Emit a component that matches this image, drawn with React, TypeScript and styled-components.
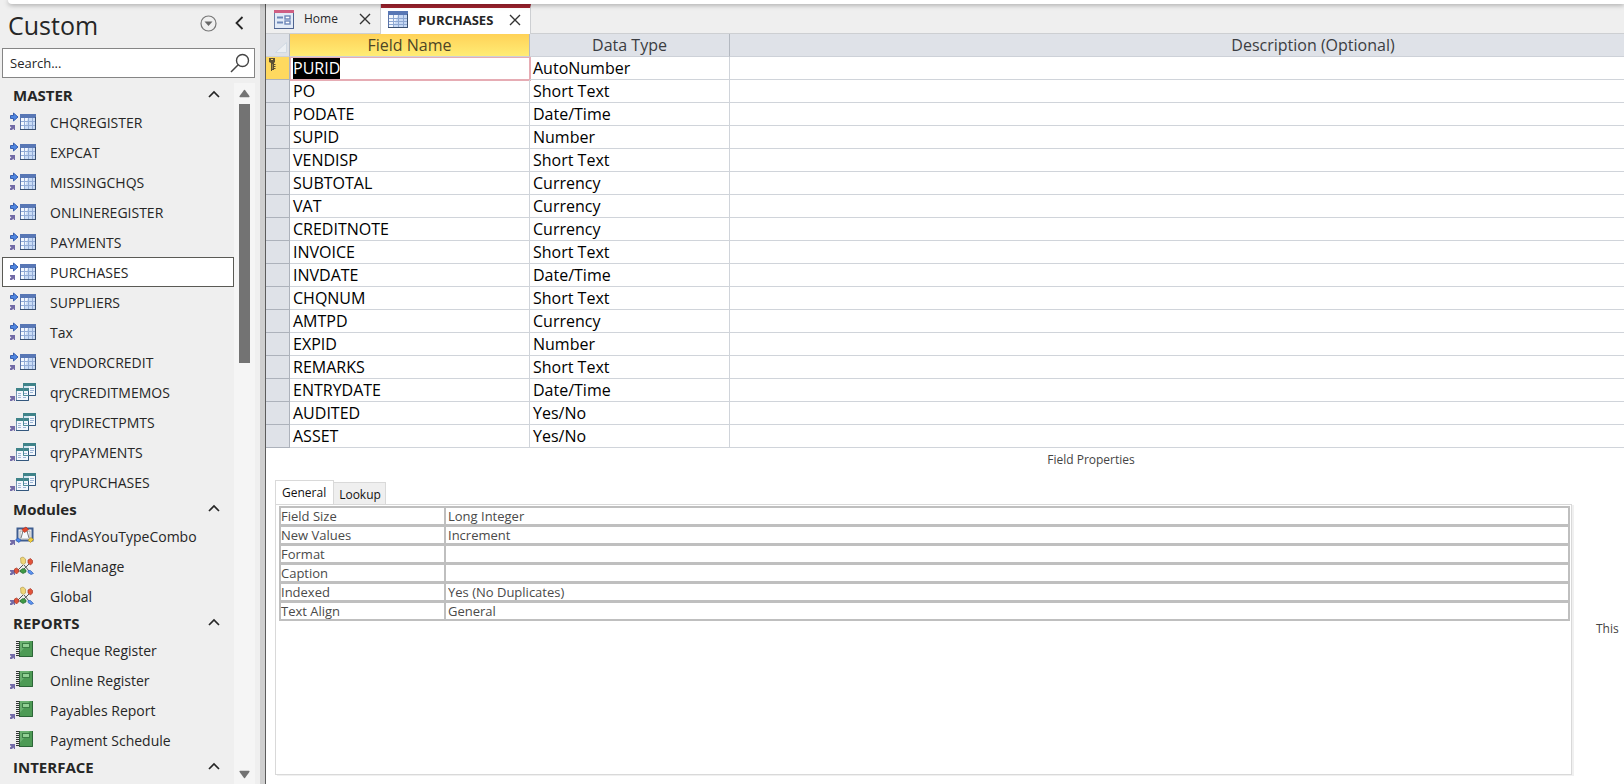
import React, { useState } from 'react';
import styled, { createGlobalStyle } from 'styled-components';

const GlobalStyle = createGlobalStyle`
  *, *::before, *::after { box-sizing: border-box; }
  body {
    margin: 0;
    background: #efefef;
    color: #262626;
    font-family: "Open Sans", "Noto Sans", sans-serif;
    font-size: 14px;
  }
  button {
    margin: 0;
    padding: 0;
    border: 0;
    background: none;
    color: inherit;
    font: inherit;
    cursor: pointer;
  }
  svg { display: block; flex: none; }
`;

/* ---------- shell ---------- */

const Page = styled.div`
  min-height: 100vh;
  display: flex;
  flex-direction: column;
  overflow: hidden;
`;

const RibbonEdge = styled.div`
  position: relative;
  z-index: 1;
  flex: none;
  height: 4px;
  margin-left: 8px;
  background: #fff;
  border-bottom-left-radius: 8px;
  box-shadow: 0 1px 5px rgba(0, 0, 0, 0.35);
`;

const Body = styled.div`
  flex: 1;
  display: flex;
`;

const Splitter = styled.div`
  flex: none;
  width: 6px;
  background: #cfcfcf;
  border-right: 1px solid #5c5c5c;
`;

/* ---------- navigation pane ---------- */

const NavPane = styled.nav`
  flex: none;
  width: 260px;
  display: flex;
  flex-direction: column;
`;

const NavHeader = styled.header`
  display: flex;
  align-items: center;
  height: 38px;
  margin-bottom: 6px;
  padding: 0 16px 0 8px;
`;

const NavTitle = styled.h1`
  flex: 1;
  margin: 0;
  padding-top: 4px;
  font-size: 25px;
  font-weight: 400;
  line-height: 34px;
`;

const HeaderActions = styled.div`
  display: flex;
  align-items: center;
  gap: 18px;
`;

const SearchBox = styled.form`
  display: flex;
  align-items: center;
  height: 30px;
  margin: 0 5px 5px 2px;
  padding: 0 4px 0 7px;
  border: 1px solid #858585;
  background: #fff;
`;

const SearchInput = styled.input`
  flex: 1;
  min-width: 0;
  padding: 0;
  border: 0;
  outline: 0;
  background: none;
  color: #262626;
  font: 13px "Open Sans", sans-serif;
  &::placeholder { color: #262626; opacity: 1; }
`;

const NavScroller = styled.div`
  flex: 1;
  display: flex;
  padding-right: 5px;
`;

const NavList = styled.div`
  flex: 1;
  min-width: 0;
`;

const GroupHeader = styled.button`
  display: flex;
  align-items: center;
  justify-content: space-between;
  width: 100%;
  height: 24px;
  padding: 0 14px 0 13px;
  font-size: 15px;
  font-weight: 700;
  line-height: 24px;
`;

const Items = styled.ul`
  margin: 0;
  padding: 0 0 0 2px;
  list-style: none;
`;

const NavItem = styled.button<{ $selected: boolean }>`
  display: flex;
  align-items: center;
  gap: 14px;
  width: 100%;
  height: 30px;
  padding-left: 7px;
  border: 1px solid ${(p) => (p.$selected ? '#5a5a55' : 'transparent')};
  background: ${(p) => (p.$selected ? '#fff' : 'transparent')};
  white-space: nowrap;
`;

const NavLabel = styled.span`
  padding-top: 2px;
  line-height: 26px;
`;

const ScrollTrack = styled.div`
  flex: none;
  width: 21px;
  display: flex;
  flex-direction: column;
  align-items: center;
  padding: 6px 0 5px;
  background: #f5f5f5;
`;

const ScrollThumb = styled.div`
  width: 11px;
  height: 259px;
  margin-top: 6px;
  margin-bottom: auto;
  background: #737373;
`;

/* ---------- document area ---------- */

const Workspace = styled.main`
  flex: 1;
  min-width: 0;
  display: flex;
  flex-direction: column;
  overflow: hidden;
`;

const TabStrip = styled.div`
  flex: none;
  display: flex;
  height: 30px;
  border-bottom: 1px solid #cdcfd2;
`;

const DocTab = styled.div<{ $active: boolean }>`
  display: flex;
  align-items: center;
  height: ${(p) => (p.$active ? 30 : 29)}px;
  padding: ${(p) => (p.$active ? '0 9px 3px 7px' : '0 9px 0 8px')};
  border-top: ${(p) => (p.$active ? '4px solid #a0232f' : '0')};
  border-right: 1px solid #cdcfd2;
  background: ${(p) => (p.$active ? '#fff' : 'transparent')};
`;

const DocTabButton = styled.button<{ $active: boolean }>`
  display: flex;
  align-items: center;
  gap: 10px;
  margin-right: ${(p) => (p.$active ? 16 : 21)}px;
  font-size: ${(p) => (p.$active ? 13 : 12)}px;
  font-weight: ${(p) => (p.$active ? 700 : 400)};
`;

/* The design surface is wider than the visible window and is cut off on the right. */
const Surface = styled.div`
  flex: 1;
  width: calc(100% + 292px);
  display: flex;
  flex-direction: column;
  background: #fff;
`;

const FieldTable = styled.table`
  width: calc(100% - 19px);
  table-layout: fixed;
  border-spacing: 0;
  color: #000;
  font-size: 16px;
  line-height: 22px;
`;

const Col = styled.col<{ $width?: number }>`
  width: ${(p) => (p.$width ? `${p.$width}px` : 'auto')};
`;

const HeadCell = styled.th<{ $current?: boolean }>`
  height: 23px;
  padding: 0;
  border-right: 1px solid #b3b8c0;
  border-bottom: 1px solid #cdd1d8;
  background: ${(p) => (p.$current ? 'linear-gradient(#ffd258, #ffec75)' : '#dfe2e8')};
  color: ${(p) => (p.$current ? '#4d4526' : '#3b3d42')};
  font-weight: 400;
`;

const CornerCell = styled(HeadCell)`
  padding: 0 2px 3px 0;
  vertical-align: bottom;
  svg { margin-left: auto; }
`;

const RowSelector = styled.td<{ $current: boolean }>`
  height: 23px;
  padding: 1px 0 0 3px;
  vertical-align: top;
  border-right: 1px solid #adb2bb;
  border-bottom: 1px solid #adb2bb;
  background: ${(p) => (p.$current ? '#ffd95f' : '#dfe2e8')};
`;

const Cell = styled.td<{ $focused?: boolean }>`
  position: relative;
  height: 23px;
  padding: 0 3px;
  border-right: 1px solid #d0d4da;
  border-bottom: 1px solid #d0d4da;
  white-space: nowrap;
  &::after {
    content: "";
    display: ${(p) => (p.$focused ? 'block' : 'none')};
    position: absolute;
    inset: 0 -2px -2px 0;
    border: 1px solid #e6acb4;
    border-width: 1px 2px 2px 1px;
  }
`;

const SelectedText = styled.span`
  display: inline-block;
  background: #000;
  color: #fff;
`;

/* ---------- field properties ---------- */

const PropertiesTitle = styled.h2`
  margin: 2px 0 10px;
  color: #444;
  font-size: 12px;
  font-weight: 400;
  line-height: 20px;
  text-align: center;
`;

const PropertyTabs = styled.div`
  display: flex;
  align-items: flex-end;
  padding-left: 9px;
`;

const PropertyTab = styled.button<{ $active: boolean }>`
  height: ${(p) => (p.$active ? 24 : 22)}px;
  padding: ${(p) => (p.$active ? '0 7px 0 6px' : '1px 4px 0 5px')};
  border: 1px solid #d9d9d9;
  border-bottom: 0;
  border-left-width: ${(p) => (p.$active ? 1 : 0)}px;
  background: ${(p) => (p.$active ? '#fff' : '#efefef')};
  color: #111;
  font-size: 12px;
`;

const PropertiesArea = styled.div`
  flex: 1;
  display: flex;
  padding: 0 0 9px 9px;
`;

const PropertySheet = styled.section`
  flex: 1;
  padding: 1px 1px 0 3px;
  border: 1px solid #d9d9d9;
  box-shadow: 2px 1px 0 #f0f0f0;
`;

const PropertyTable = styled.table`
  width: 100%;
  table-layout: fixed;
  border: 2px solid #bfbfbf;
  border-bottom: 0;
  border-spacing: 0;
  color: #4a4a4a;
  font-size: 13px;
  line-height: 16px;
`;

const PropertyName = styled.th`
  width: 165px;
  padding: 0;
  border-right: 2px solid #bfbfbf;
  border-bottom: 3px solid #bfbfbf;
  font-weight: 400;
  text-align: left;
  tr:last-child > & { border-bottom-width: 2px; }
`;

const PropertyValue = styled.td`
  padding: 0 2px;
  border-bottom: 3px solid #bfbfbf;
  tr:last-child > & { border-bottom-width: 2px; }
`;

const PropertyLabel = styled.label`
  display: block;
  height: 16px;
`;

const PropertyInput = styled.input`
  display: block;
  width: 100%;
  height: 16px;
  padding: 0;
  border: 0;
  outline: 0;
  background: none;
  color: inherit;
  font: inherit;
`;

const HelpText = styled.aside`
  flex: none;
  display: flex;
  align-items: center;
  width: 344px;
  padding: 0 24px 22px;
  color: #444;
  font-size: 12px;
`;

/* ---------- icons ---------- */

type Kind = 'table' | 'query' | 'classModule' | 'module' | 'report';

const Link = ({ y }: { y: number }) => (
  <path d={`M0 ${y}H5V${y + 5}H4L3.5 ${y + 3.5}L2 ${y + 5}H0V${y + 3.5}L1.5 ${y + 2}L0 ${y + 1.5}Z`} fill="#726aa6" />
);

const TableGlyph = () => (
  <g>
    <rect x="10.5" y="2.5" width="15" height="15" fill="#f4f8fe" stroke="#5a73a8" />
    <path d="M18 6H25V17H14Z" fill="#c9dbf6" />
    <path d="M10 2H26V6H10Z" fill="#5877b5" />
    <path d="M11 9.5H25M11 13.5H25M14.5 6V17M18.5 6V17M22.5 6V17" stroke="#93acd6" fill="none" />
    <path d="M25.5 5V17.5H10" stroke="#3a5070" fill="none" />
  </g>
);

const QueryWindow = ({ x, y }: { x: number; y: number }) => (
  <g>
    <rect x={x + 0.5} y={y + 0.5} width="12" height="12" fill="#f3f8fd" stroke="#7195b5" />
    <path d={`M${x} ${y}H${x + 13}V${y + 3}H${x}Z`} fill="#3f8389" />
    <path d={`M${x + 2} ${y + 5.5}H${x + 5}M${x + 2} ${y + 7.5}H${x + 5}M${x + 2} ${y + 9.5}H${x + 5}M${x + 7} ${y + 5.5}H${x + 11}M${x + 7} ${y + 7.5}H${x + 11}M${x + 7} ${y + 9.5}H${x + 10}`} stroke="#9bb4d4" />
    <path d={`M${x + 12.5} ${y + 3}V${y + 12.5}H${x}`} stroke="#33577d" fill="none" />
  </g>
);

const ObjectIcon = ({ kind }: { kind: Kind }) => (
  <svg width="26" height="20" viewBox="0 0 26 20" aria-hidden="true">
    {kind === 'table' && (
      <>
        <path d="M.5 3.5H3.5V1L8 5L3.5 9V6.5H.5Z" fill="#4f86e0" stroke="#2d55a8" strokeWidth=".9" />
        <Link y={13} />
        <TableGlyph />
      </>
    )}
    {kind === 'query' && (
      <>
        <Link y={14} />
        <QueryWindow x={13} y={1} />
        <QueryWindow x={6} y={6} />
        <path d="M13.5 4V13.5H19" stroke="#4d8d97" fill="none" />
        <path d="M14 4H19V6H14Z" fill="#d5e6f2" />
      </>
    )}
    {kind === 'classModule' && (
      <>
        <Link y={14} />
        <rect x="7.5" y="2.5" width="15" height="12" fill="#fff" stroke="#3f5d8f" strokeWidth="2" />
        <rect x="10" y="5" width="10" height="8" fill="#f7f9fd" stroke="#9a9a9a" strokeWidth=".8" />
        <path d="M13 5L11 12M17 5L19 12" stroke="#555" strokeWidth=".8" />
        <path d="M12 3.5L14.5 6.5L18.5 3.5L16 1Z" fill="#e4472c" stroke="#b03420" strokeWidth=".7" />
        <path d="M5.5 14L8 12L11 14L9 16.5Z" fill="#4c86e8" stroke="#2c5cb4" strokeWidth=".7" />
        <path d="M18 14L21 11.5L23.5 13.5L20.5 16.5Z" fill="#f2cf3c" stroke="#b3922a" strokeWidth=".7" />
      </>
    )}
    {kind === 'module' && (
      <>
        <path d="M13 9L8 14M14 9L19 15M19 8L13 14M8 15H13" stroke="#555" strokeWidth="1" />
        <Link y={14} />
        <path d="M10.5 2L13 1L15.5 3V7L13.5 8.5L11 7Z" fill="#efd678" stroke="#b59d4e" strokeWidth=".7" />
        <path d="M18 4L20.5 2.5L22.5 4.5V7L20.5 9L18 7Z" fill="#e0533a" stroke="#a83a26" strokeWidth=".7" />
        <path d="M4.5 13L6.5 12L8.5 13.5V16L6.5 18L4.5 16Z" fill="#e0533a" stroke="#a83a26" strokeWidth=".7" />
        <path d="M10.5 14L13 12.5L16 14V16L13 17.5L10.5 16Z" fill="#3f9a45" stroke="#276a30" strokeWidth=".7" />
        <path d="M18 14.5H20.5L23.5 17.5L21 18.5L18 16.5Z" fill="#5b93ef" stroke="#3563b8" strokeWidth=".7" />
      </>
    )}
    {kind === 'report' && (
      <>
        <Link y={14} />
        <rect x="8" y="1" width="15" height="16" fill="#4d9a55" />
        <path d="M8 1H20L8 15Z" fill="#6bb071" />
        <path d="M22.5 1V16.5H8" stroke="#2c6538" fill="none" />
        <rect x="12.5" y="3.5" width="7" height="4" fill="#93cf95" stroke="#3b7d45" />
        <path d="M7.5 1V17" stroke="#e8e8e8" strokeWidth="3" />
        <path d="M7.5 1V17" stroke="#333" strokeWidth="3" strokeDasharray="1 1" />
        <path d="M9.5 1V17" stroke="#2c5a35" />
      </>
    )}
  </svg>
);

const FormTabIcon = () => (
  <svg width="20" height="20" viewBox="0 0 20 20" aria-hidden="true">
    <rect x=".5" y="1.5" width="19" height="18" fill="#e3ebf7" stroke="#6c7fa6" />
    <path d="M0 1H20V4H0Z" fill="#cf5f83" />
    <path d="M3 8.5H9M3 13.5H9" stroke="#6d87b8" strokeWidth="2" />
    <rect x="11" y="7" width="5" height="3" fill="#fff" stroke="#6d87b8" strokeWidth="1.4" />
    <rect x="11" y="12" width="5" height="3" fill="#fff" stroke="#6d87b8" strokeWidth="1.4" />
    <path d="M19.5 4V19.5H0" stroke="#4f6490" fill="none" />
  </svg>
);

const TableTabIcon = () => (
  <svg width="20" height="17" viewBox="0 0 20 17" aria-hidden="true">
    <rect x=".5" y=".5" width="19" height="16" fill="#f3f7fd" stroke="#5a73a8" />
    <path d="M10 4H19V16H5Z" fill="#c6d8f4" />
    <path d="M0 0H20V4H0Z" fill="#5877b5" />
    <path d="M1 7.5H19M1 10.5H19M1 13.5H19M5.5 4V16M10.5 4V16M15.5 4V16" stroke="#8ea8d2" />
    <path d="M19.5 3V16.5H0" stroke="#3a5070" fill="none" />
  </svg>
);

const CloseIcon = () => (
  <svg width="12" height="12" viewBox="0 0 12 12" aria-hidden="true">
    <path d="M1 1L11 11M11 1L1 11" stroke="#333" strokeWidth="1.4" />
  </svg>
);

const ChevronUp = () => (
  <svg width="12" height="10" viewBox="0 0 12 10" aria-hidden="true">
    <path d="M1 7L6 2L11 7" fill="none" stroke="#262626" strokeWidth="1.7" />
  </svg>
);

const ChevronLeft = () => (
  <svg width="9" height="14" viewBox="0 0 9 14" aria-hidden="true">
    <path d="M7.5 1L1.5 7L7.5 13" fill="none" stroke="#262626" strokeWidth="1.8" />
  </svg>
);

const MenuIcon = () => (
  <svg width="17" height="17" viewBox="0 0 17 17" aria-hidden="true">
    <circle cx="8.5" cy="8.5" r="7.5" fill="none" stroke="#777" strokeWidth="1.2" />
    <path d="M4.5 6.5H12.5L8.5 11Z" fill="#666" />
  </svg>
);

const SearchIcon = () => (
  <svg width="20" height="20" viewBox="0 0 20 20" aria-hidden="true">
    <circle cx="12.5" cy="7.5" r="6" fill="none" stroke="#444" strokeWidth="1.4" />
    <path d="M8.2 11.8L1 19" stroke="#444" strokeWidth="1.5" />
  </svg>
);

const ScrollArrow = ({ down = false }: { down?: boolean }) => (
  <svg width="11" height="9" viewBox="0 0 11 9" aria-hidden="true">
    <path
      d={down ? 'M1 .8H10Q11 1 10.4 2L6 8Q5.5 8.6 5 8L.6 2Q0 1 1 .8Z' : 'M1 8.2H10Q11 8 10.4 7L6 1Q5.5 .4 5 1L.6 7Q0 8 1 8.2Z'}
      fill="#737373"
    />
  </svg>
);

const SelectAllIcon = () => (
  <svg width="12" height="11" viewBox="0 0 12 11" aria-hidden="true">
    <path d="M11.5 .5V10.5H.5Z" fill="#eceff3" stroke="#cbd5df" strokeWidth=".8" />
  </svg>
);

const KeyIcon = () => (
  <svg width="7" height="13" viewBox="0 0 7 13" aria-label="Primary key">
    <path d="M0 0H6V4L5 5V12H3V13H2V5L0 4Z" fill="#5c4f33" />
    <path d="M2 1.5H4" stroke="#ffd95f" />
    <path d="M5 6.5H6.5M5 8.5H6.5M5 10.5H6.5" stroke="#5c4f33" />
    <path d="M3.5 6V11" stroke="#b29a55" strokeWidth=".7" />
  </svg>
);

/* ---------- data ---------- */

const groups: { name: string; items: [string, Kind][] }[] = [
  {
    name: 'MASTER',
    items: [
      ['CHQREGISTER', 'table'],
      ['EXPCAT', 'table'],
      ['MISSINGCHQS', 'table'],
      ['ONLINEREGISTER', 'table'],
      ['PAYMENTS', 'table'],
      ['PURCHASES', 'table'],
      ['SUPPLIERS', 'table'],
      ['Tax', 'table'],
      ['VENDORCREDIT', 'table'],
      ['qryCREDITMEMOS', 'query'],
      ['qryDIRECTPMTS', 'query'],
      ['qryPAYMENTS', 'query'],
      ['qryPURCHASES', 'query'],
    ],
  },
  {
    name: 'Modules',
    items: [
      ['FindAsYouTypeCombo', 'classModule'],
      ['FileManage', 'module'],
      ['Global', 'module'],
    ],
  },
  {
    name: 'REPORTS',
    items: [
      ['Cheque Register', 'report'],
      ['Online Register', 'report'],
      ['Payables Report', 'report'],
      ['Payment Schedule', 'report'],
    ],
  },
  { name: 'INTERFACE', items: [] },
];

const fields: [string, string][] = [
  ['PURID', 'AutoNumber'],
  ['PO', 'Short Text'],
  ['PODATE', 'Date/Time'],
  ['SUPID', 'Number'],
  ['VENDISP', 'Short Text'],
  ['SUBTOTAL', 'Currency'],
  ['VAT', 'Currency'],
  ['CREDITNOTE', 'Currency'],
  ['INVOICE', 'Short Text'],
  ['INVDATE', 'Date/Time'],
  ['CHQNUM', 'Short Text'],
  ['AMTPD', 'Currency'],
  ['EXPID', 'Number'],
  ['REMARKS', 'Short Text'],
  ['ENTRYDATE', 'Date/Time'],
  ['AUDITED', 'Yes/No'],
  ['ASSET', 'Yes/No'],
];

const properties: [string, string][] = [
  ['Field Size', 'Long Integer'],
  ['New Values', 'Increment'],
  ['Format', ''],
  ['Caption', ''],
  ['Indexed', 'Yes (No Duplicates)'],
  ['Text Align', 'General'],
];

export default function App() {
  const [selected, setSelected] = useState('PURCHASES');

  return (
    <Page>
      <GlobalStyle />
      <RibbonEdge />
      <Body>
        <NavPane aria-label="Database objects">
          <NavHeader>
            <NavTitle>Custom</NavTitle>
            <HeaderActions>
              <button type="button" aria-label="Navigation options"><MenuIcon /></button>
              <button type="button" aria-label="Collapse pane"><ChevronLeft /></button>
            </HeaderActions>
          </NavHeader>
          <SearchBox onSubmit={(e) => e.preventDefault()}>
            <SearchInput type="text" placeholder="Search..." aria-label="Search objects" />
            <button type="submit" aria-label="Search"><SearchIcon /></button>
          </SearchBox>
          <NavScroller>
            <NavList>
              {groups.map((group) => (
                <section key={group.name}>
                  <GroupHeader type="button" aria-expanded="true">
                    {group.name}
                    <ChevronUp />
                  </GroupHeader>
                  <Items>
                    {group.items.map(([name, kind]) => (
                      <li key={name}>
                        <NavItem type="button" $selected={name === selected} onClick={() => setSelected(name)}>
                          <ObjectIcon kind={kind} />
                          <NavLabel>{name}</NavLabel>
                        </NavItem>
                      </li>
                    ))}
                  </Items>
                </section>
              ))}
            </NavList>
            <ScrollTrack>
              <button type="button" aria-label="Scroll up"><ScrollArrow /></button>
              <ScrollThumb />
              <button type="button" aria-label="Scroll down"><ScrollArrow down /></button>
            </ScrollTrack>
          </NavScroller>
        </NavPane>
        <Splitter />
        <Workspace>
          <TabStrip>
            <DocTab $active={false}>
              <DocTabButton type="button" $active={false}><FormTabIcon />Home</DocTabButton>
              <button type="button" aria-label="Close Home"><CloseIcon /></button>
            </DocTab>
            <DocTab $active>
              <DocTabButton type="button" $active><TableTabIcon />PURCHASES</DocTabButton>
              <button type="button" aria-label="Close PURCHASES"><CloseIcon /></button>
            </DocTab>
          </TabStrip>
          <Surface>
            <FieldTable>
              <colgroup>
                <Col $width={24} />
                <Col $width={240} />
                <Col $width={200} />
                <Col />
              </colgroup>
              <thead>
                <tr>
                  <CornerCell aria-label="Select all"><SelectAllIcon /></CornerCell>
                  <HeadCell scope="col" $current>Field Name</HeadCell>
                  <HeadCell scope="col">Data Type</HeadCell>
                  <HeadCell scope="col">Description (Optional)</HeadCell>
                </tr>
              </thead>
              <tbody>
                {fields.map(([name, type], i) => (
                  <tr key={name}>
                    <RowSelector $current={i === 0}>{i === 0 && <KeyIcon />}</RowSelector>
                    <Cell $focused={i === 0}>{i === 0 ? <SelectedText>{name}</SelectedText> : name}</Cell>
                    <Cell>{type}</Cell>
                    <Cell />
                  </tr>
                ))}
              </tbody>
            </FieldTable>
            <PropertiesTitle>Field Properties</PropertiesTitle>
            <PropertyTabs role="tablist">
              <PropertyTab type="button" role="tab" aria-selected="true" $active>General</PropertyTab>
              <PropertyTab type="button" role="tab" aria-selected="false" $active={false}>Lookup</PropertyTab>
            </PropertyTabs>
            <PropertiesArea>
              <PropertySheet>
                <PropertyTable>
                  <tbody>
                    {properties.map(([name, value]) => {
                      const id = name.toLowerCase().replace(' ', '-');
                      return (
                        <tr key={name}>
                          <PropertyName scope="row"><PropertyLabel htmlFor={id}>{name}</PropertyLabel></PropertyName>
                          <PropertyValue><PropertyInput id={id} type="text" defaultValue={value} /></PropertyValue>
                        </tr>
                      );
                    })}
                  </tbody>
                </PropertyTable>
              </PropertySheet>
              <HelpText>This</HelpText>
            </PropertiesArea>
          </Surface>
        </Workspace>
      </Body>
    </Page>
  );
}
